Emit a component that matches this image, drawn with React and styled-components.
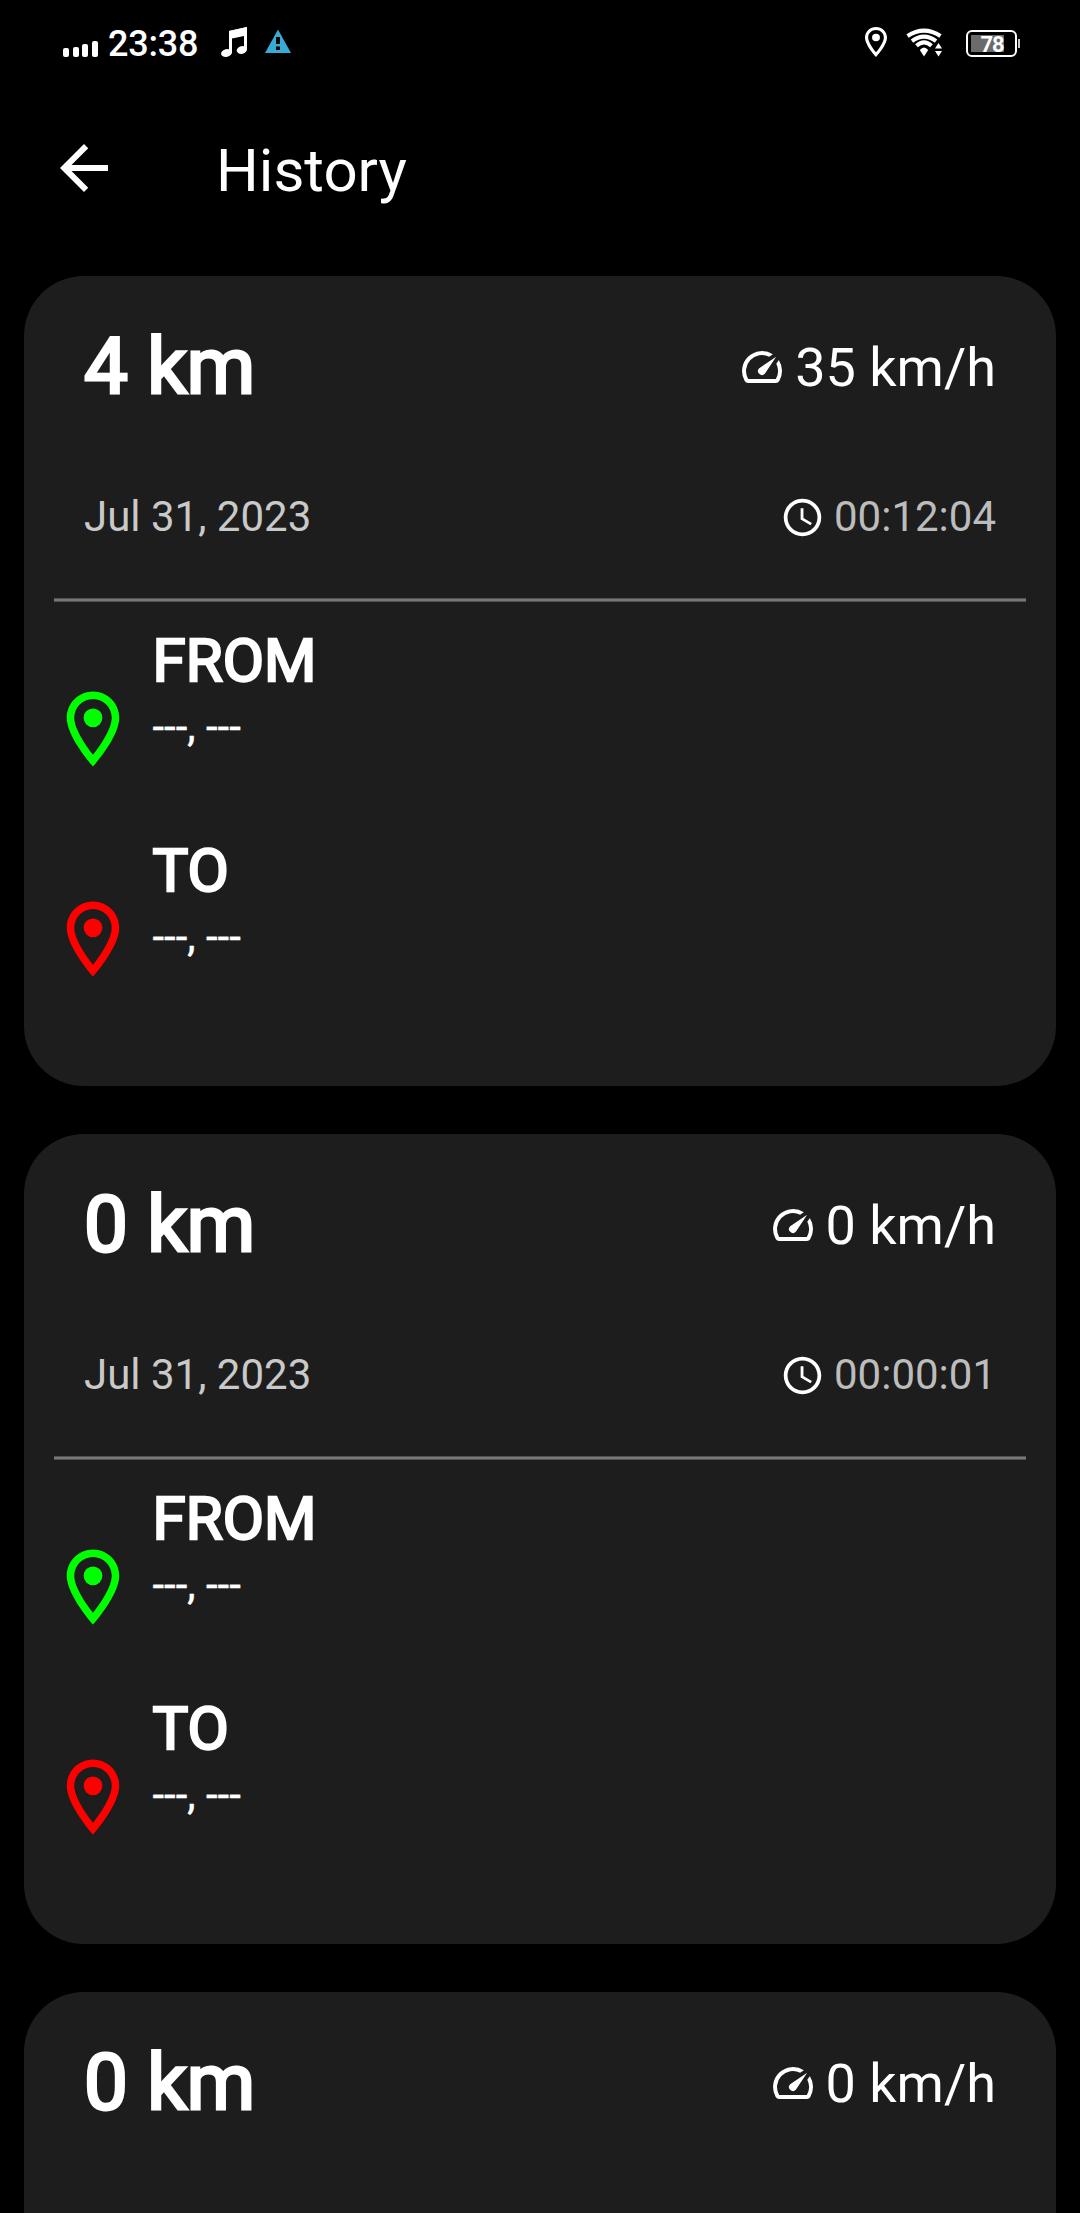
import React from 'react';
import styled, {createGlobalStyle} from 'styled-components';

const Colors = {
    black: '#000000',
    card: '#1d1d1d',
    white: '#ffffff',
    gray: '#787878',
    date: '#c9c9c9',
    time: '#bcbcbc',
    blue: '#37aad6',
    green: '#00ff00',
    red: '#ff0000'
};

const rides = [
    {id: 1, distance: '4 km', speed: '35 km/h', date: 'Jul 31, 2023', time: '00:12:04', from: '---, ---', to: '---, ---'},
    {id: 2, distance: '0 km', speed: '0 km/h', date: 'Jul 31, 2023', time: '00:00:01', from: '---, ---', to: '---, ---'},
    {id: 3, distance: '0 km', speed: '0 km/h', date: 'Jul 31, 2023', time: '00:00:01', from: '---, ---', to: '---, ---'}
];

const GlobalStyle = createGlobalStyle`
    * {
        box-sizing: border-box;
    }

    html, body {
        margin: 0;
        padding: 0;
        background-color: ${Colors.black};
        overflow: hidden;
    }
`;

const Screen = styled.div`
    width: 1080px;
    height: 2213px;
    overflow: hidden;
    background-color: ${Colors.black};
    color: ${Colors.white};
    font-family: Roboto, "Liberation Sans", sans-serif;
`;

const StatusBar = styled.div`
    display: flex;
    justify-content: space-between;
    height: 84px;
    padding: 27px 60px 0 63px;
`;

const StatusGroup = styled.div`
    display: flex;
    align-items: flex-start;
    height: 30px;
`;

const StatusIcon = styled.svg`
    display: block;
    flex: none;
    margin-left: ${props => props.$gap || 0}px;
    fill: ${props => props.$color || Colors.white};
`;

const Signal = styled.div`
    display: flex;
    align-items: flex-end;
    gap: 3.6px;
    width: 35px;
    height: 30px;
`;

const SignalBar = styled.span`
    width: 6px;
    height: ${props => props.$height}px;
    border-radius: 2px;
    background-color: ${Colors.white};
`;

const Clock = styled.span`
    width: 91px;
    margin-left: 10px;
    font-size: 36px;
    font-weight: 500;
    line-height: 35px;
    letter-spacing: -0.2px;
    white-space: nowrap;
`;

const Battery = styled.div`
    display: flex;
    align-items: center;
    margin: 3px 0 0 24px;
`;

const BatteryBody = styled.div`
    width: 51px;
    height: 27px;
    padding: 3px;
    border: 2px solid ${Colors.white};
    border-radius: 6px;
`;

const BatteryLevel = styled.div`
    width: 33px;
    height: 17px;
    padding-left: 9.5px;
    background-color: #6b6b6b;
    font-size: 22px;
    font-weight: 700;
    line-height: 19px;
    letter-spacing: -1.2px;
`;

const BatteryCap = styled.span`
    width: 2px;
    height: 9px;
    margin-left: 1px;
    background-color: #c8c8c8;
`;

const Header = styled.header`
    display: flex;
    align-items: flex-start;
    height: 192px;
    padding: 48px 48px 0;
`;

const Title = styled.h1`
    margin: 3px 0 0 96px;
    font-size: 60px;
    font-weight: 400;
    line-height: 72px;
`;

const List = styled.main`
    display: flex;
    flex-direction: column;
    gap: 48px;
    padding: 0 24px;
`;

const Card = styled.article`
    flex: none;
    height: 810px;
    padding: 45px 30px 0;
    border-radius: 60px;
    background-color: ${Colors.card};
`;

const Row = styled.div`
    display: flex;
    align-items: center;
    justify-content: space-between;
    height: ${props => props.$height}px;
    margin-bottom: ${props => props.$after}px;
    padding: 0 30px;
`;

const Distance = styled.span`
    font-size: 78px;
    line-height: 92px;
    -webkit-text-stroke: 3px ${Colors.white};
`;

const Metric = styled.span`
    display: flex;
    align-items: center;
    gap: 9px;
`;

const Speed = styled.span`
    padding-top: 2px;
    font-size: 54px;
    line-height: 64px;
`;

const Small = styled.span`
    color: ${props => props.$color};
    font-size: 42px;
    line-height: 50px;
`;

const Divider = styled.hr`
    height: 4px;
    margin: 0 0 24px;
    border: 0;
    border-top: 1px solid #515151;
    border-bottom: 1px solid #515151;
    background-color: ${Colors.gray};
`;

const Stop = styled.div`
    display: flex;
    height: 210px;
`;

const PinIcon = styled.svg`
    flex: none;
    width: 90px;
    height: 90px;
    margin: 57.5px 14.500px 0 -6px;
    fill: ${props => props.$color};
`;

const StopName = styled.div`
    font-size: 60px;
    line-height: 70px;
    -webkit-text-stroke: 2.4px ${Colors.white};
`;

const StopPlace = styled.div`
    margin-top: 6px;
    font-size: 42px;
    line-height: 50px;
    -webkit-text-stroke: 0.4px ${Colors.white};
`;

const Icon = styled.svg`
    display: block;
    flex: none;
    fill: ${Colors.white};
`;

const PIN = 'M12 2C8.13 2 5 5.13 5 9c0 5.25 7 13 7 13s7-7.75 7-13c0-3.87-3.13-7-7-7zM7 9c0-2.76 2.24-5 5-5s5 2.24 5 5c0 2.88-2.88 7.19-5 9.88C9.92 16.21 7 11.85 7 9z';

const Status = () => (
    <StatusBar>
        <StatusGroup>
            <Signal>
                <SignalBar $height={9} />
                <SignalBar $height={10} />
                <SignalBar $height={13} />
                <SignalBar $height={16} />
            </Signal>
            <Clock>23:38</Clock>
            <StatusIcon $gap={22} width="26" height="30" viewBox="0 0 26 30">
                <path d="M8 4L26 0v22h-3V9L11 11.500v14H8z" />
                <path d="M8 4L26 0v7.500L8 11z" />
                <ellipse cx="5.500" cy="26" rx="5.500" ry="3.800" transform="rotate(-12 5.500 26)" />
                <ellipse cx="20.800" cy="23" rx="5.200" ry="3.800" transform="rotate(-12 20.800 23)" />
            </StatusIcon>
            <StatusIcon $gap={18} $color={Colors.blue} width="26" height="30" viewBox="0 0 26 30">
                <path d="M13 2.500l13 23.500H0z" />
                <path fill={Colors.black} d="M11 10h4v7h-4zM11 19.500h4v3.500h-4z" />
            </StatusIcon>
        </StatusGroup>
        <StatusGroup>
            <StatusIcon width="22" height="30" viewBox="5 2 14 20" preserveAspectRatio="none">
                <path d={PIN} />
                <circle cx="12" cy="9" r="2.500" />
            </StatusIcon>
            <StatusIcon $gap={18} width="37" height="30" viewBox="0 0 37 30">
                <g fill="none" stroke={Colors.white} strokeWidth="4">
                    <path d="M2.500 9Q19 -1.800 35.500 9" />
                    <path d="M7 14.200Q19 5 31 14.200" />
                    <path d="M11.500 18.800Q19 12 26.500 18.800" />
                </g>
                <path d="M14.800 23Q19 18 23.200 23L19 29.500z" />
                <path stroke={Colors.black} strokeWidth="3" paintOrder="stroke" d="M33.500 16l3.500 5.500h-7zM30 24h7l-3.500 5.500z" />
            </StatusIcon>
            <Battery>
                <BatteryBody>
                    <BatteryLevel>78</BatteryLevel>
                </BatteryBody>
                <BatteryCap />
            </Battery>
        </StatusGroup>
    </StatusBar>
);

const Place = ({name, place, color}) => (
    <Stop>
        <PinIcon $color={color} viewBox="0 0 24 24">
            <path d={PIN} />
            <circle cx="12" cy="9" r="2.500" />
        </PinIcon>
        <div>
            <StopName>{name}</StopName>
            <StopPlace>{place}</StopPlace>
        </div>
    </Stop>
);

const RideCard = ({ride}) => (
    <Card>
        <Row $height={92} $after={79}>
            <Distance>{ride.distance}</Distance>
            <Metric>
                <Icon width="48" height="48" viewBox="0 0 24 24">
                    <path d="M20.380 8.570l-1.230 1.850a8 8 0 0 1-.220 7.580H5.070A8 8 0 0 1 15.580 6.850l1.850-1.230A10 10 0 0 0 3.350 19a2 2 0 0 0 1.720 1h13.850a2 2 0 0 0 1.740-1 10 10 0 0 0-.270-10.440z" />
                    <path d="M10.590 15.410a2 2 0 0 0 2.830 0l5.660-8.490-8.490 5.660a2 2 0 0 0 0 2.830z" />
                </Icon>
                <Speed>{ride.speed}</Speed>
            </Metric>
        </Row>
        <Row $height={50} $after={56}>
            <Small $color={Colors.date}>{ride.date}</Small>
            <Metric>
                <Icon width="45" height="45" viewBox="0 0 24 24">
                    <path d="M11.990 2C6.470 2 2 6.480 2 12s4.470 10 9.990 10C17.520 22 22 17.520 22 12S17.520 2 11.990 2zM12 20c-4.420 0-8-3.580-8-8s3.580-8 8-8 8 3.580 8 8-3.580 8-8 8z" />
                    <path d="M12.500 7H11v6l5.250 3.150.750-1.230-4.500-2.670z" />
                </Icon>
                <Small $color={Colors.time}>{ride.time}</Small>
            </Metric>
        </Row>
        <Divider />
        <Place name="FROM" place={ride.from} color={Colors.green} />
        <Place name="TO" place={ride.to} color={Colors.red} />
    </Card>
);

const App = () => (
    <Screen>
        <GlobalStyle />
        <Status />
        <Header>
            <Icon width="72" height="72" viewBox="0 0 24 24">
                <path d="M20 11H7.830l5.590-5.590L12 4l-8 8 8 8 1.410-1.410L7.830 13H20v-2z" />
            </Icon>
            <Title>History</Title>
        </Header>
        <List>
            {rides.map(ride => <RideCard key={ride.id} ride={ride} />)}
        </List>
    </Screen>
);

export default App;
